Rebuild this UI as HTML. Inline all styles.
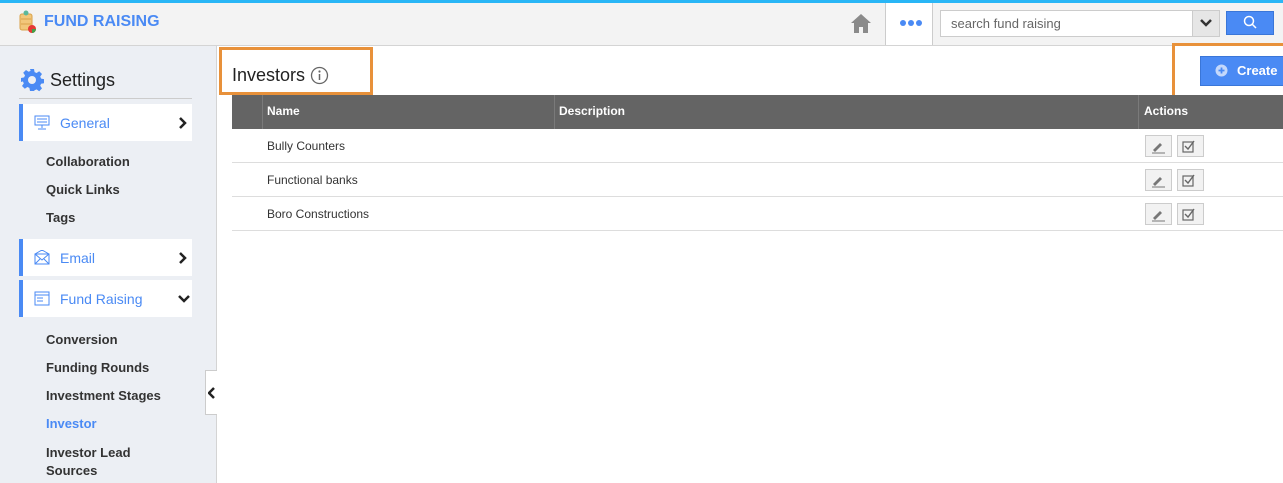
<!DOCTYPE html>
<html><head><style>
*{margin:0;padding:0;box-sizing:border-box}
body{width:1283px;height:483px;overflow:hidden;font-family:"Liberation Sans",Arial,sans-serif;background:#fff;position:relative}
.a{position:absolute}
.nav{font-size:13px;font-weight:bold;color:#333;left:46px}
.item{left:19px;width:173px;height:37px;background:#fff;border-left:4px solid #4a8af4}
.item span{position:absolute;left:37px;top:11px;font-size:14px;color:#4a8af4}
.item svg.ic{position:absolute;left:11px;top:11px}
.chev{position:absolute;right:5px;top:13px}
.row{left:232px;width:1051px;height:34px;border-bottom:1px solid #ddd;font-size:12px;color:#333}
.row span{position:absolute;left:35px;top:10px}
.btn{position:absolute;width:27px;height:22px;background:#f2f2f2;border:1px solid #ccc;top:6px}
</style></head><body>
<div class="a" style="left:0;top:0;width:1283px;height:3px;background:#29b6f6"></div>
<div class="a" style="left:0;top:3px;width:1283px;height:43px;background:#f3f3f3;border-bottom:1px solid #d4d4d4"></div>
<svg class="a" style="left:18px;top:10px" width="20" height="24"><rect x="2" y="4" width="12" height="16" rx="2" fill="#f2c77a" stroke="#d9a24a"/><line x1="3" y1="9" x2="13" y2="9" stroke="#d9a24a"/><line x1="3" y1="14" x2="13" y2="14" stroke="#d9a24a"/><circle cx="8" cy="3" r="2.5" fill="#5cb89a"/><circle cx="14" cy="19" r="4" fill="#e53935"/><path d="M14 19 L18 19 A4 4 0 0 1 14 23Z" fill="#43a047"/></svg>
<div class="a" style="left:44px;top:13px;font-size:16px;font-weight:bold;color:#4a8af4">FUND RAISING</div>
<svg class="a" style="left:850px;top:12px" width="22" height="22" viewBox="0 0 22 22"><path d="M11 2 L1 11 L4 11 L4 21 L9 21 L9 15 L13 15 L13 21 L18 21 L18 11 L21 11Z" fill="#8a8a8a"/></svg>
<div class="a" style="left:885px;top:3px;width:48px;height:42px;background:#fff;border-left:1px solid #ccc;border-right:1px solid #ccc"></div>
<svg class="a" style="left:899px;top:19px" width="24" height="8"><circle cx="4" cy="4" r="3" fill="#4a8af4"/><circle cx="12" cy="4" r="3" fill="#4a8af4"/><circle cx="20" cy="4" r="3" fill="#4a8af4"/></svg>
<div class="a" style="left:940px;top:10px;width:280px;height:27px;background:#fff;border:1px solid #ccc"></div>
<div class="a" style="left:951px;top:16px;font-size:13px;color:#666">search fund raising</div>
<div class="a" style="left:1192px;top:11px;width:27px;height:25px;background:#e6e6e6;border-left:1px solid #ccc"></div>
<svg class="a" style="left:1200px;top:18px" width="12" height="10"><path d="M1 2 L6 7 L11 2" stroke="#333" stroke-width="2.5" fill="none"/></svg>
<div class="a" style="left:1226px;top:11px;width:48px;height:24px;background:#4a8af4;border:1px solid #3a76d8"></div>
<svg class="a" style="left:1243px;top:15px" width="14" height="14"><circle cx="6" cy="6" r="4.5" stroke="#fff" stroke-width="1.5" fill="none"/><line x1="9.5" y1="9.5" x2="13" y2="13" stroke="#fff" stroke-width="1.5"/></svg>

<div class="a" style="left:0;top:46px;width:217px;height:437px;background:#eceff4;border-right:1px solid #d4d4d4"></div>
<svg class="a" style="left:20px;top:68px" width="24" height="24" viewBox="0 0 24 24"><path fill="#4a8af4" d="M10 1h4l.6 3.1 2 .9 2.6-1.8 2.8 2.8-1.8 2.6.9 2 3.1.6v4l-3.1.6-.9 2 1.8 2.6-2.8 2.8-2.6-1.8-2 .9L14 23h-4l-.6-3.1-2-.9-2.6 1.8-2.8-2.8 1.8-2.6-.9-2L1 14v-4l3.1-.6.9-2L3.2 4.8 6 2 8.6 3.8l2-.9z"/><circle cx="12" cy="12" r="4" fill="#eceff4"/></svg>
<div class="a" style="left:50px;top:70px;font-size:18px;color:#222">Settings</div>
<div class="a" style="left:19px;top:98px;width:173px;height:1px;background:#ccc"></div>
<div class="a item" style="top:104px"><svg class="ic" width="16" height="15"><rect x="1" y="1" width="14" height="9" fill="none" stroke="#4a8af4"/><line x1="3" y1="4" x2="13" y2="4" stroke="#4a8af4"/><line x1="3" y1="7" x2="13" y2="7" stroke="#4a8af4"/><line x1="8" y1="10" x2="8" y2="13" stroke="#4a8af4"/><line x1="4" y1="14" x2="12" y2="14" stroke="#4a8af4"/></svg><span>General</span><svg class="chev" width="8" height="12"><path d="M1 1 L6 6 L1 11" stroke="#222" stroke-width="2.5" fill="none"/></svg></div>
<div class="a nav" style="top:154px">Collaboration</div>
<div class="a nav" style="top:182px">Quick Links</div>
<div class="a nav" style="top:210px">Tags</div>
<div class="a item" style="top:239px"><svg class="ic" width="16" height="15"><rect x="1" y="4" width="14" height="10" fill="none" stroke="#4a8af4"/><path d="M1 4 L8 10 L15 4 M1 4 L8 0 L15 4 M1 14 L6 9 M15 14 L10 9" fill="none" stroke="#4a8af4"/></svg><span>Email</span><svg class="chev" width="8" height="12"><path d="M1 1 L6 6 L1 11" stroke="#222" stroke-width="2.5" fill="none"/></svg></div>
<div class="a item" style="top:280px"><svg class="ic" width="16" height="15"><rect x="1" y="1" width="14" height="13" fill="none" stroke="#4a8af4"/><line x1="1" y1="4" x2="15" y2="4" stroke="#4a8af4"/><line x1="3" y1="7" x2="9" y2="7" stroke="#4a8af4"/><line x1="3" y1="10" x2="9" y2="10" stroke="#4a8af4"/></svg><span>Fund Raising</span><svg class="chev" style="top:15px;right:2px" width="12" height="8"><path d="M1 1 L6 6 L11 1" stroke="#222" stroke-width="2.5" fill="none"/></svg></div>
<div class="a nav" style="top:332px">Conversion</div>
<div class="a nav" style="top:360px">Funding Rounds</div>
<div class="a nav" style="top:388px">Investment Stages</div>
<div class="a nav" style="top:416px;color:#4a8af4">Investor</div>
<div class="a nav" style="top:444px;line-height:18px">Investor Lead<br>Sources</div>
<div class="a" style="left:205px;top:370px;width:12px;height:45px;background:#fff;border:1px solid #ccc;border-right:none"></div>
<svg class="a" style="left:208px;top:387px" width="8" height="12"><path d="M6 1 L1 6 L6 11" stroke="#222" stroke-width="2.5" fill="none"/></svg>

<div class="a" style="left:219px;top:47px;width:154px;height:48px;border:3px solid #e8913a"></div>
<div class="a" style="left:232px;top:65px;font-size:18px;color:#222">Investors</div>
<svg class="a" style="left:310px;top:66px" width="19" height="19"><circle cx="9.5" cy="9.5" r="8" fill="none" stroke="#666" stroke-width="1.3"/><circle cx="9.5" cy="5.5" r="1.1" fill="#666"/><line x1="9.5" y1="8" x2="9.5" y2="14" stroke="#666" stroke-width="1.5"/></svg>
<div class="a" style="left:1172px;top:43px;width:115px;height:57px;border:3px solid #e8913a"></div>
<div class="a" style="left:1200px;top:56px;width:90px;height:30px;background:#4a8af4;border:1px solid #3a76d8"></div>
<svg class="a" style="left:1215px;top:64px" width="13" height="13"><circle cx="6.5" cy="6.5" r="6" fill="#c4d8fb"/><path d="M6.5 3.5v6M3.5 6.5h6" stroke="#4a8af4" stroke-width="1.8"/></svg>
<div class="a" style="left:1237px;top:63px;font-size:13px;font-weight:bold;color:#fff">Create</div>

<div class="a" style="left:232px;top:95px;width:1051px;height:34px;background:#646464"></div>
<div class="a" style="left:262px;top:95px;width:1px;height:34px;background:#7a7a7a"></div>
<div class="a" style="left:554px;top:95px;width:1px;height:34px;background:#7a7a7a"></div>
<div class="a" style="left:1138px;top:95px;width:1px;height:34px;background:#7a7a7a"></div>
<div class="a" style="left:267px;top:104px;font-size:12px;font-weight:bold;color:#fff">Name</div>
<div class="a" style="left:559px;top:104px;font-size:12px;font-weight:bold;color:#fff">Description</div>
<div class="a" style="left:1144px;top:104px;font-size:12px;font-weight:bold;color:#fff">Actions</div>

<div class="a row" style="top:129px"><span>Bully Counters</span><div class="btn" style="left:913px"></div><div class="btn" style="left:945px"></div></div>
<div class="a row" style="top:163px"><span>Functional banks</span><div class="btn" style="left:913px"></div><div class="btn" style="left:945px"></div></div>
<div class="a row" style="top:197px"><span>Boro Constructions</span><div class="btn" style="left:913px"></div><div class="btn" style="left:945px"></div></div>
<svg class="a" style="left:1145px;top:135px" width="60" height="90">
<g id="r"><path d="M8 15 L15 8 L17 10 L10 17Z" fill="#777"/><line x1="7" y1="18" x2="20" y2="18" stroke="#777"/><rect x="38" y="7" width="10" height="10" fill="none" stroke="#666" stroke-width="1.2"/><path d="M40 11 L43 14 L49 6" fill="none" stroke="#666" stroke-width="1.4"/></g>
<use href="#r" y="34"/><use href="#r" y="68"/></svg>
</body></html>
